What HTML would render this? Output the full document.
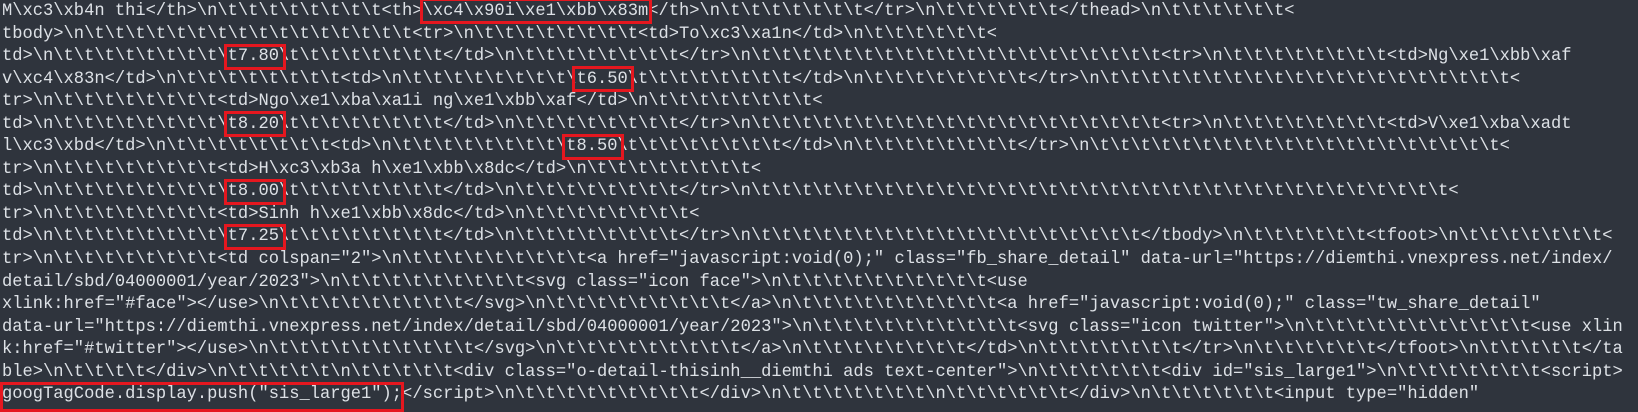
<!DOCTYPE html>
<html><head><meta charset="utf-8"><style>
html,body{margin:0;padding:0;background:#2f343d;width:1638px;height:405px;overflow:hidden}
#t{position:absolute;left:2px;top:1px;font-family:"Liberation Mono",monospace;font-size:17.1px;line-height:22.55px;color:#dde1e6;white-space:pre;margin:0}
.b{position:absolute;border:3px solid #e5171f;box-sizing:border-box;height:26px}
</style></head><body>
<pre id="t">M\xc3\xb4n thi&lt;/th&gt;\n\t\t\t\t\t\t\t\t&lt;th&gt;\xc4\x90i\xe1\xbb\x83m&lt;/th&gt;\n\t\t\t\t\t\t\t&lt;/tr&gt;\n\t\t\t\t\t\t&lt;/thead&gt;\n\t\t\t\t\t\t&lt;
tbody&gt;\n\t\t\t\t\t\t\t\t\t\t\t\t\t\t\t\t&lt;tr&gt;\n\t\t\t\t\t\t\t\t&lt;td&gt;To\xc3\xa1n&lt;/td&gt;\n\t\t\t\t\t\t&lt;
td&gt;\n\t\t\t\t\t\t\t\t\t7.80\t\t\t\t\t\t\t\t&lt;/td&gt;\n\t\t\t\t\t\t\t\t&lt;/tr&gt;\n\t\t\t\t\t\t\t\t\t\t\t\t\t\t\t\t\t\t\t\t&lt;tr&gt;\n\t\t\t\t\t\t\t\t&lt;td&gt;Ng\xe1\xbb\xaf
v\xc4\x83n&lt;/td&gt;\n\t\t\t\t\t\t\t\t&lt;td&gt;\n\t\t\t\t\t\t\t\t\t6.50\t\t\t\t\t\t\t\t&lt;/td&gt;\n\t\t\t\t\t\t\t\t&lt;/tr&gt;\n\t\t\t\t\t\t\t\t\t\t\t\t\t\t\t\t\t\t\t\t&lt;
tr&gt;\n\t\t\t\t\t\t\t\t&lt;td&gt;Ngo\xe1\xba\xa1i ng\xe1\xbb\xaf&lt;/td&gt;\n\t\t\t\t\t\t\t\t&lt;
td&gt;\n\t\t\t\t\t\t\t\t\t8.20\t\t\t\t\t\t\t\t&lt;/td&gt;\n\t\t\t\t\t\t\t\t&lt;/tr&gt;\n\t\t\t\t\t\t\t\t\t\t\t\t\t\t\t\t\t\t\t\t&lt;tr&gt;\n\t\t\t\t\t\t\t\t&lt;td&gt;V\xe1\xba\xadt
l\xc3\xbd&lt;/td&gt;\n\t\t\t\t\t\t\t\t&lt;td&gt;\n\t\t\t\t\t\t\t\t\t8.50\t\t\t\t\t\t\t\t&lt;/td&gt;\n\t\t\t\t\t\t\t\t&lt;/tr&gt;\n\t\t\t\t\t\t\t\t\t\t\t\t\t\t\t\t\t\t\t\t&lt;
tr&gt;\n\t\t\t\t\t\t\t\t&lt;td&gt;H\xc3\xb3a h\xe1\xbb\x8dc&lt;/td&gt;\n\t\t\t\t\t\t\t\t&lt;
td&gt;\n\t\t\t\t\t\t\t\t\t8.00\t\t\t\t\t\t\t\t&lt;/td&gt;\n\t\t\t\t\t\t\t\t&lt;/tr&gt;\n\t\t\t\t\t\t\t\t\t\t\t\t\t\t\t\t\t\t\t\t\t\t\t\t\t\t\t\t\t\t\t\t\t\t&lt;
tr&gt;\n\t\t\t\t\t\t\t\t&lt;td&gt;Sinh h\xe1\xbb\x8dc&lt;/td&gt;\n\t\t\t\t\t\t\t\t&lt;
td&gt;\n\t\t\t\t\t\t\t\t\t7.25\t\t\t\t\t\t\t\t&lt;/td&gt;\n\t\t\t\t\t\t\t\t&lt;/tr&gt;\n\t\t\t\t\t\t\t\t\t\t\t\t\t\t\t\t\t\t\t&lt;/tbody&gt;\n\t\t\t\t\t\t&lt;tfoot&gt;\n\t\t\t\t\t\t\t&lt;
tr&gt;\n\t\t\t\t\t\t\t\t&lt;td colspan="2"&gt;\n\t\t\t\t\t\t\t\t\t&lt;a href="javascript:void(0);" class="fb_share_detail" data-url="https://diemthi.vnexpress.net/index/
detail/sbd/04000001/year/2023"&gt;\n\t\t\t\t\t\t\t\t\t&lt;svg class="icon face"&gt;\n\t\t\t\t\t\t\t\t\t\t&lt;use
xlink:href="#face"&gt;&lt;/use&gt;\n\t\t\t\t\t\t\t\t\t&lt;/svg&gt;\n\t\t\t\t\t\t\t\t\t&lt;/a&gt;\n\t\t\t\t\t\t\t\t\t\t&lt;a href="javascript:void(0);" class="tw_share_detail"
data-url="https://diemthi.vnexpress.net/index/detail/sbd/04000001/year/2023"&gt;\n\t\t\t\t\t\t\t\t\t\t&lt;svg class="icon twitter"&gt;\n\t\t\t\t\t\t\t\t\t\t\t&lt;use xlin
k:href="#twitter"&gt;&lt;/use&gt;\n\t\t\t\t\t\t\t\t\t\t&lt;/svg&gt;\n\t\t\t\t\t\t\t\t\t&lt;/a&gt;\n\t\t\t\t\t\t\t\t&lt;/td&gt;\n\t\t\t\t\t\t\t&lt;/tr&gt;\n\t\t\t\t\t\t&lt;/tfoot&gt;\n\t\t\t\t\t&lt;/ta
ble&gt;\n\t\t\t\t&lt;/div&gt;\n\t\t\t\t\t\n\t\t\t\t\t&lt;div class="o-detail-thisinh__diemthi ads text-center"&gt;\n\t\t\t\t\t\t&lt;div id="sis_large1"&gt;\n\t\t\t\t\t\t\t&lt;script&gt;
googTagCode.display.push("sis_large1");&lt;/script&gt;\n\t\t\t\t\t\t\t\t\t&lt;/div&gt;\n\t\t\t\t\t\t\t\n\t\t\t\t\t\t&lt;/div&gt;\n\t\t\t\t\t\t&lt;input type="hidden"</pre>
<div class="b" style="left:420px;top:-2px;width:232px"></div>
<div class="b" style="left:224px;top:44px;width:62px"></div>
<div class="b" style="left:572px;top:66px;width:62px"></div>
<div class="b" style="left:224px;top:111px;width:62px"></div>
<div class="b" style="left:562px;top:134px;width:62px"></div>
<div class="b" style="left:224px;top:179px;width:62px"></div>
<div class="b" style="left:224px;top:224px;width:62px"></div>
<div class="b" style="left:0px;top:382px;width:404px;height:30px"></div>
</body></html>
